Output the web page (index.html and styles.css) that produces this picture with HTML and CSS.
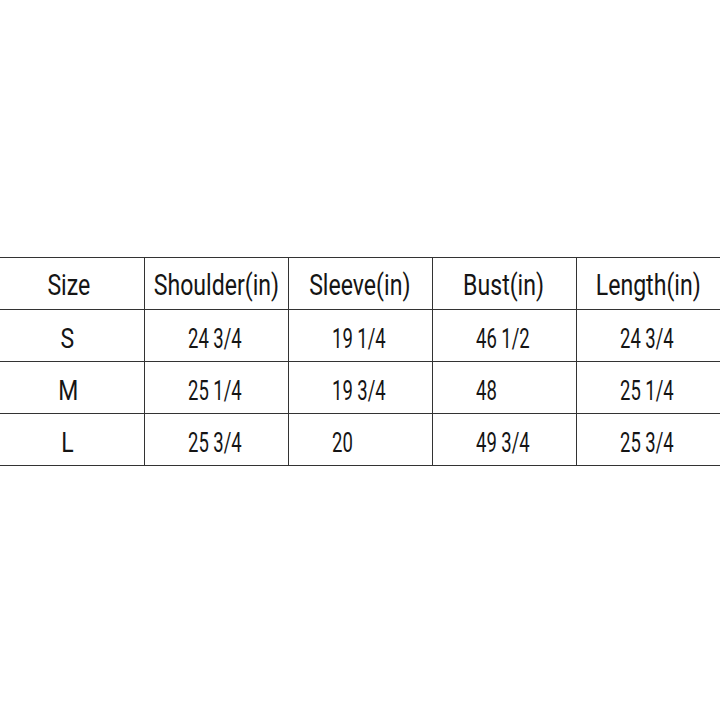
FILE: index.html
```html
<!DOCTYPE html>
<html>
<head>
<meta charset="utf-8">
<link rel="stylesheet" href="styles.css">
</head>
<body>
<div class="page">
  <table class="sizes">
    <thead>
      <tr>
        <th class="first"><span class="t">Size</span></th>
        <th><span class="t">Shoulder(in)</span></th>
        <th><span class="t">Sleeve(in)</span></th>
        <th><span class="t">Bust(in)</span></th>
        <th><span class="t">Length(in)</span></th>
      </tr>
    </thead>
    <tbody>
      <tr>
        <td class="size"><span class="t">S</span></td>
        <td><span class="t">24 3/4</span></td>
        <td><span class="t">19 1/4</span></td>
        <td><span class="t">46 1/2</span></td>
        <td><span class="t">24 3/4</span></td>
      </tr>
      <tr>
        <td class="size"><span class="t">M</span></td>
        <td><span class="t">25 1/4</span></td>
        <td><span class="t">19 3/4</span></td>
        <td><span class="t">48</span></td>
        <td><span class="t">25 1/4</span></td>
      </tr>
      <tr>
        <td class="size"><span class="t">L</span></td>
        <td><span class="t">25 3/4</span></td>
        <td><span class="t">20</span></td>
        <td><span class="t">49 3/4</span></td>
        <td><span class="t">25 3/4</span></td>
      </tr>
    </tbody>
  </table>
</div>
</body>
</html>
```

FILE: styles.css
```css
html, body {
  margin: 0;
  padding: 0;
  background: #ffffff;
}
.page {
  width: 720px;
  height: 720px;
  padding-top: 257px;
  box-sizing: border-box;
}
.sizes {
  width: 720px;
  border-collapse: collapse;
  table-layout: fixed;
  font-family: Roboto, "Liberation Sans", sans-serif;
  color: #151515;
}
.sizes th, .sizes td {
  height: 52px;
  border-top: 1px solid #333333;
  border-bottom: 1px solid #333333;
  border-left: 1px solid #333333;
  padding: 0;
  box-sizing: border-box;
  font-weight: normal;
  vertical-align: middle;
  white-space: nowrap;
}
.sizes th:first-child, .sizes td:first-child {
  border-left: none;
}
.t {
  display: inline-block;
}
.sizes th {
  text-align: center;
  font-size: 30px;
  line-height: 36px;
  padding-top: 2px;
}
.sizes th.first {
  padding-right: 6px;
}
.sizes th .t {
  margin: 0 -30px;
  transform: scaleX(0.77);
  transform-origin: center;
}
.sizes td {
  text-align: left;
  padding-left: 43px;
  font-size: 28px;
  line-height: 34px;
  padding-top: 7px;
}
.sizes td .t {
  transform: scaleX(0.66);
  transform-origin: left center;
}
.sizes td.size {
  text-align: center;
  padding-left: 0;
  padding-right: 8px;
}
.sizes td.size .t {
  transform: scaleX(0.82);
  transform-origin: center;
}
```
